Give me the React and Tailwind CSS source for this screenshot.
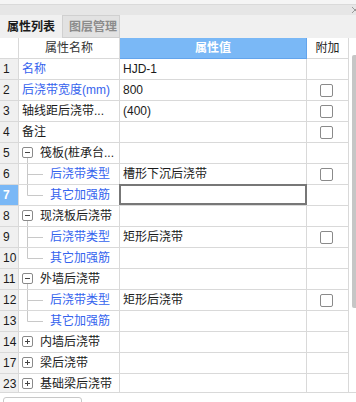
import { Fragment } from 'react'

const rows = [
  { n: 1, name: '名称', blue: true, value: 'HJD-1' },
  { n: 2, name: '后浇带宽度(mm)', blue: true, value: '800', check: true },
  { n: 3, name: '轴线距后浇带...', value: '(400)', check: true },
  { n: 4, name: '备注', check: true },
  { n: 5, name: '筏板(桩承台...', tree: 'open' },
  { n: 6, name: '后浇带类型', child: 'mid', value: '槽形下沉后浇带', check: true },
  { n: 7, name: '其它加强筋', child: 'last', editing: true },
  { n: 8, name: '现浇板后浇带', tree: 'open' },
  { n: 9, name: '后浇带类型', child: 'mid', value: '矩形后浇带', check: true },
  { n: 10, name: '其它加强筋', child: 'last' },
  { n: 11, name: '外墙后浇带', tree: 'open' },
  { n: 12, name: '后浇带类型', child: 'mid', value: '矩形后浇带', check: true },
  { n: 13, name: '其它加强筋', child: 'last' },
  { n: 14, name: '内墙后浇带', tree: 'closed' },
  { n: 17, name: '梁后浇带', tree: 'closed' },
  { n: 23, name: '基础梁后浇带', tree: 'closed' },
]

const font = { fontFamily: '"Liberation Sans", "Noto Sans CJK SC", sans-serif' }

function ToggleBox({ open }) {
  return (
    <svg width="21" height="20" className="shrink-0">
      <rect x="3.5" y="4.5" width="10" height="10" rx="1.5" fill="white" stroke="#8a8a8a" />
      <line x1="6" y1="9.5" x2="11" y2="9.5" stroke="#444" />
      {!open && <line x1="8.5" y1="7" x2="8.5" y2="12" stroke="#444" />}
      {open && <line x1="8.5" y1="15" x2="8.5" y2="20" stroke="#c8c8c8" />}
    </svg>
  )
}

function Branch({ last }) {
  return (
    <svg width="31" height="20" className="shrink-0">
      <line x1="8.5" y1="0" x2="8.5" y2={last ? 10.5 : 20} stroke="#c8c8c8" />
      <line x1="8.5" y1="10.5" x2="24" y2="10.5" stroke="#c8c8c8" />
    </svg>
  )
}

function Checkbox() {
  return <div className="w-[13px] h-[13px] border border-[#8a8a8a] rounded-[2px] bg-white" />
}

function Row({ r }) {
  const sel = r.editing
  return (
    <div className="flex h-[21px] text-[12px] text-[#1a1a1a]">
      <div className={`w-[19px] shrink-0 border-r border-b border-[#d9d9d9] flex items-center pl-[3px] ${sel ? 'bg-[#7ab8f6] text-white font-bold' : 'bg-[#f0f0f0]'}`}>
        {r.n}
      </div>
      <div className="w-[101px] shrink-0 border-r border-b border-[#d9d9d9] bg-white flex items-center whitespace-nowrap overflow-hidden">
        {r.tree && (
          <Fragment>
            <ToggleBox open={r.tree === 'open'} />
            <span>{r.name}</span>
          </Fragment>
        )}
        {r.child && (
          <Fragment>
            <Branch last={r.child === 'last'} />
            <span className="text-[#3563ee]">{r.name}</span>
          </Fragment>
        )}
        {!r.tree && !r.child && (
          <span className={`pl-[3px] ${r.blue ? 'text-[#3563ee]' : ''}`}>{r.name}</span>
        )}
      </div>
      <div className="relative w-[187px] shrink-0 border-r border-b border-[#d9d9d9] bg-white flex items-center pl-[3px] whitespace-nowrap">
        {r.value}
        {r.editing && <div className="absolute -top-px -left-px right-[-1px] bottom-0 border-2 border-[#777777] bg-white" />}
      </div>
      <div className="w-[42px] shrink-0 border-r border-b border-[#d9d9d9] bg-white flex items-center justify-center pr-[2px]">
        {r.check && <Checkbox />}
      </div>
    </div>
  )
}

export default function App() {
  return (
    <div className="w-[356px] h-[402px] overflow-hidden bg-white flex flex-col" style={font}>
      <div className="h-[4px] shrink-0 bg-[#f5f5f5] border-b border-[#dadada] box-content" />
      <div className="h-[10px] shrink-0 bg-[#e6e6e6] flex justify-end items-center">
        <svg width="4" height="6">
          <line x1="0" y1="0" x2="6" y2="6" stroke="#9a9a9a" />
          <line x1="0" y1="6" x2="6" y2="0" stroke="#9a9a9a" />
        </svg>
      </div>
      <div className="h-[23px] shrink-0 bg-[#f0f0f0] flex items-stretch text-[12px] font-bold">
        <div className="w-[62px] flex items-center justify-center text-[#1a1a1a]">属性列表</div>
        <div className="w-[58px] flex items-center justify-center pl-[4px] bg-[#e2e2e2] border border-[#d0d0d0] text-[#8c8c8c]">图层管理</div>
      </div>

      <div className="flex h-[354px] shrink-0">
        <div className="w-[349px] overflow-hidden">
          <div className="flex h-[21px] text-[12px]">
            <div className="w-[19px] shrink-0 border-r border-b border-[#d9d9d9] bg-white" />
            <div className="w-[101px] shrink-0 border-r border-b border-[#d9d9d9] bg-white flex items-center justify-center text-[#333]">属性名称</div>
            <div className="w-[187px] shrink-0 border border-t-0 border-l-0 border-[#63a4ec] bg-[#7ab8f6] flex items-center justify-center text-white font-bold">属性值</div>
            <div className="w-[42px] shrink-0 border-r border-b border-[#d9d9d9] bg-white flex items-center justify-center text-[#222]">附加</div>
          </div>
          {rows.map(r => <Row key={r.n} r={r} />)}
        </div>
        <div className="flex-1 bg-white pt-[17px] flex justify-end">
          <div className="w-[4px] h-[253px] bg-[#c6c6c6] rounded-l-[2px]" />
        </div>
      </div>

      <div className="flex-1 min-h-0 overflow-hidden border-t border-[#d9d9d9] bg-white pt-[4px] pl-[3px]">
        <div className="w-[79px] h-[20px] border border-[#c8c8c8] rounded-[3px]" />
      </div>
    </div>
  )
}
